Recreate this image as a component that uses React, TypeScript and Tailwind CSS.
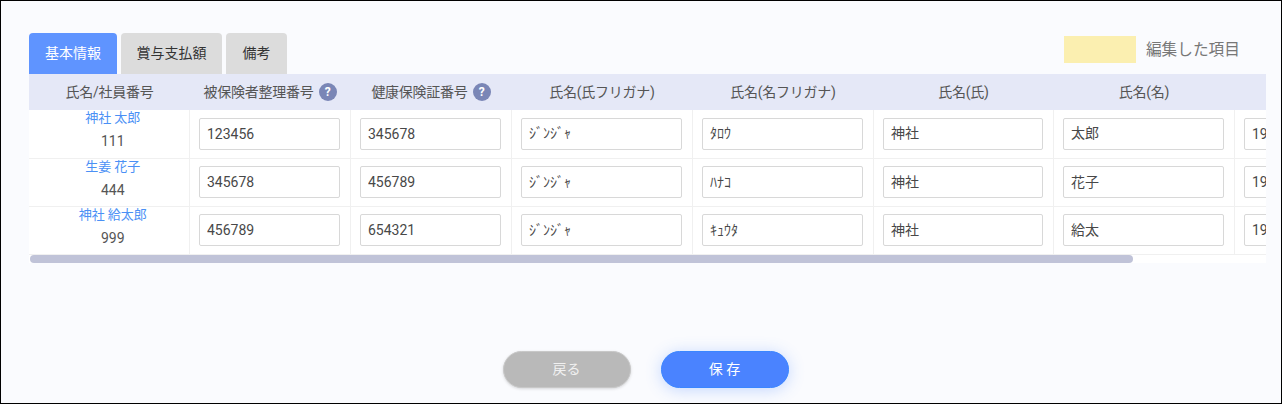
const columns = [
  { label: '氏名/社員番号', width: 'w-[160px]' },
  { label: '被保険者整理番号', width: 'w-[161px]', help: true },
  { label: '健康保険証番号', width: 'w-[161px]', help: true },
  { label: '氏名(氏フリガナ)', width: 'w-[181px]' },
  { label: '氏名(名フリガナ)', width: 'w-[181px]' },
  { label: '氏名(氏)', width: 'w-[180px]' },
  { label: '氏名(名)', width: 'w-[181px]' },
  { label: '', width: 'w-[182px]' },
]

const rows = [
  { name: '神社 太郎', no: '111', values: ['123456', '345678', 'ｼﾞﾝｼﾞｬ', 'ﾀﾛｳ', '神社', '太郎', '1990/01/01'] },
  { name: '生姜 花子', no: '444', values: ['345678', '456789', 'ｼﾞﾝｼﾞｬ', 'ﾊﾅｺ', '神社', '花子', '1990/01/01'] },
  { name: '神社 給太郎', no: '999', values: ['456789', '654321', 'ｼﾞﾝｼﾞｬ', 'ｷｭｳﾀ', '神社', '給太', '1990/01/01'] },
]

const tabs = [
  { label: '基本情報', width: 'w-[88px]' },
  { label: '賞与支払額', width: 'w-[101px]' },
  { label: '備考', width: 'w-[61px]' },
]

export default function App() {
  return (
    <div className="h-[404px] overflow-hidden border border-black bg-[#fafbfe] pl-[28px] pr-[15px] pt-[32px] font-['Roboto','Noto_Sans_CJK_JP',sans-serif] text-[14px] text-[#555]">
      {/* Tabs and legend */}
      <div className="flex items-start justify-between">
        <div className="flex gap-1">
          {tabs.map((tab, i) => (
            <button
              key={tab.label}
              className={`h-[41px] rounded-t ${tab.width} ${i === 0 ? 'bg-[#5f94ff] text-white' : 'bg-[#dcdcdc] text-[#333]'}`}
            >
              {tab.label}
            </button>
          ))}
        </div>
        <div className="mr-[26px] mt-[3px] flex items-center gap-[10px]">
          <div className="h-[27px] w-[72px] bg-[#fbefb0]" />
          <span className="text-[15.7px] text-[#777]">編集した項目</span>
        </div>
      </div>

      {/* Table */}
      <div className="bg-white">
        <div className="overflow-hidden">
          <table className="w-[1387px] table-fixed border-collapse">
            <thead>
              <tr className="h-[36px] bg-[#e5e8f7]">
                {columns.map((col) => (
                  <th key={col.label} className={`${col.width} p-0 pl-[1px] font-normal tracking-[-0.25px] text-[#555]`}>
                    <div className="flex items-center justify-center gap-[5px]">
                      {col.label}
                      {col.help && (
                        <span className="flex h-[18px] w-[18px] items-center justify-center rounded-full bg-[#7a86b6] text-[12px] font-bold text-white">
                          ?
                        </span>
                      )}
                    </div>
                  </th>
                ))}
              </tr>
            </thead>
            <tbody>
              {rows.map((row) => (
                <tr key={row.no} className="h-[48px] border-b border-[#f0f0f0]">
                  <td className="border-r border-[#f0f0f0] p-0 pl-[8px] text-center align-top">
                    <div className="text-[13px] leading-[16px] text-[#4a90f5]">{row.name}</div>
                    <div className="mt-[5px] leading-[20px]">{row.no}</div>
                  </td>
                  {row.values.map((value, i) => (
                    <td key={i} className="border-r border-[#f0f0f0] py-0 pl-[9px] pr-[10px]">
                      <input
                        readOnly
                        value={value}
                        className={`block h-[32px] w-full rounded-[2px] border border-[#d8d8d8] bg-white px-[7.5px] text-[14px] text-[#484848] outline-none ${/^[\d/]+$/.test(value) ? '' : 'pb-[3px]'}`}
                      />
                    </td>
                  ))}
                </tr>
              ))}
            </tbody>
          </table>
        </div>

        {/* Scrollbar */}
        <div className="h-[8px] pl-px">
          <div className="h-full w-[1103px] rounded-full bg-[#c0c3d8]" />
        </div>
      </div>

      {/* Actions */}
      <div className="mt-[88px] flex justify-center gap-[30px] pr-[4px]">
        <button className="h-[37px] w-[128px] rounded-full border border-[#c8c8c8] bg-[#b9b9b9] text-[#f0f0f0] shadow-[0_1px_3px_rgba(0,0,0,0.15)]">
          戻る
        </button>
        <button className="h-[37px] w-[128px] rounded-full border border-[#3a86ff] bg-[#4a83ff] text-white shadow-[0_2px_16px_rgba(74,131,255,0.3)]">
          保 存
        </button>
      </div>
    </div>
  )
}
